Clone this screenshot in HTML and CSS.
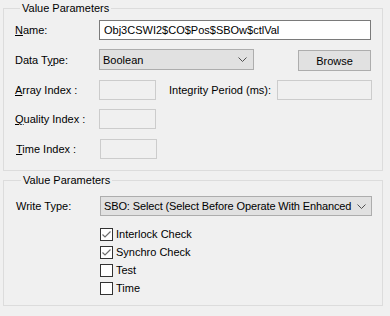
FILE: index.html
```html
<!DOCTYPE html>
<html lang="en">
<head>
    <meta charset="UTF-8">
    <title>Value Parameters</title>
    <link rel="stylesheet" href="styles.css">
</head>
<body>
    <fieldset class="group group-top">
        <legend>Value Parameters</legend>

        <div class="row row-name">
            <label class="label"><u>N</u>ame:</label>
            <div class="edit edit-name">Obj3CSWI2$CO$Pos$SBOw$ctlVal</div>
        </div>

        <div class="row row-type">
            <label class="label">Data T<u>y</u>pe:</label>
            <div class="combo combo-type">
                <span class="combo-text">Boolean</span>
                <svg class="chevron" width="9" height="5" viewBox="0 0 9 5"><path d="M0.5 0.5 L4.5 4.5 L8.5 0.5" fill="none" stroke="#505050" stroke-width="1"/></svg>
            </div>
            <button class="btn">Browse</button>
        </div>

        <div class="row row-array">
            <label class="label"><u>A</u>rray Index :</label>
            <div class="edit disabled small"></div>
            <label class="label-integrity">Integrity Period (ms):</label>
            <div class="edit disabled integrity"></div>
        </div>

        <div class="row row-quality">
            <label class="label"><u>Q</u>uality Index :</label>
            <div class="edit disabled small"></div>
        </div>

        <div class="row row-time">
            <label class="label label-time"><u>T</u>ime Index :</label>
            <div class="edit disabled small small-time"></div>
        </div>
    </fieldset>

    <fieldset class="group group-bottom">
        <legend>Value Parameters</legend>

        <div class="row row-write">
            <label class="label">Write Type:</label>
            <div class="combo combo-write">
                <span class="combo-text">SBO: Select (Select Before Operate With Enhanced</span>
                <svg class="chevron" width="9" height="5" viewBox="0 0 9 5"><path d="M0.5 0.5 L4.5 4.5 L8.5 0.5" fill="none" stroke="#505050" stroke-width="1"/></svg>
            </div>
        </div>

        <div class="checks">
            <div class="check">
                <span class="box"><svg width="11" height="11" viewBox="0 0 11 11"><path d="M1.5 5.5 L4 8 L9.5 2.5" fill="none" stroke="#6d6d6d" stroke-width="1.2"/></svg></span>
                <span>Interlock Check</span>
            </div>
            <div class="check">
                <span class="box"><svg width="11" height="11" viewBox="0 0 11 11"><path d="M1.5 5.5 L4 8 L9.5 2.5" fill="none" stroke="#6d6d6d" stroke-width="1.2"/></svg></span>
                <span>Synchro Check</span>
            </div>
            <div class="check">
                <span class="box"></span>
                <span>Test</span>
            </div>
            <div class="check">
                <span class="box"></span>
                <span>Time</span>
            </div>
        </div>
    </fieldset>
</body>
</html>
```

FILE: styles.css
```css
body {
    margin: 0;
    background: #f0f0f0;
    color: #000;
    font-family: "Liberation Sans", Arial, sans-serif;
    font-size: 11px;
    line-height: 16px;
}

.group {
    margin: 0 7px 0 3px;
    border: 1px solid #dcdcdc;
    padding: 4px 10px 11px 11px;
}

.group legend {
    margin-left: 5px;
    padding: 0 2px;
    line-height: 16px;
}

.group-bottom {
    margin-top: 1px;
    padding: 8px 9px 8px 12px;
}

.row {
    display: flex;
    align-items: center;
}

.label {
    width: 84px;
    flex: none;
}

.edit {
    box-sizing: border-box;
    height: 20px;
    border: 1px solid #7a7a7a;
    background: #fff;
    padding: 1px 4px;
    white-space: nowrap;
    overflow: hidden;
}

.edit-name {
    width: 272px;
}

.edit.disabled {
    background: #f0f0f0;
    border-color: #cccccc;
}

.edit.small {
    width: 57px;
}

.small-time {
    margin-left: 1px;
}

.label-time {
    padding-left: 1px;
    width: 83px;
}

.row-name {
    margin-bottom: 9px;
}

.row-type {
    height: 22px;
    margin-bottom: 9px;
}

.row-type .combo {
    align-self: flex-start;
}

.row-array,
.row-quality {
    margin-bottom: 9px;
}

.row-quality {
    margin-bottom: 10px;
}

.label-integrity {
    margin-left: 13px;
    width: 108px;
}

.edit.integrity {
    width: 95px;
}

.combo {
    box-sizing: border-box;
    height: 21px;
    border: 1px solid #adadad;
    background: #e1e1e1;
    display: flex;
    align-items: center;
    padding: 0 6px 0 3px;
    overflow: hidden;
}

.combo-text {
    flex: 1;
    white-space: nowrap;
}

.chevron {
    flex: none;
    margin-left: 4px;
}

.combo-type {
    width: 155px;
}

.btn {
    box-sizing: border-box;
    width: 73px;
    height: 21px;
    margin-left: 44px;
    align-self: flex-end;
    border: 1px solid #adadad;
    background: #e1e1e1;
    font: inherit;
    color: #000;
    padding: 0;
}

.combo-write {
    width: 272px;
    height: 20px;
    padding-right: 5px;
}

.combo-write .combo-text {
    letter-spacing: -0.12px;
}

.combo-write .chevron {
    margin-left: 2px;
}

.checks {
    margin: 9px 0 0 84px;
}

.check {
    display: flex;
    align-items: center;
    height: 18px;
}

.box {
    box-sizing: border-box;
    width: 13px;
    height: 13px;
    border: 1px solid #333;
    background: #fff;
    margin-right: 3px;
    display: flex;
}
```
